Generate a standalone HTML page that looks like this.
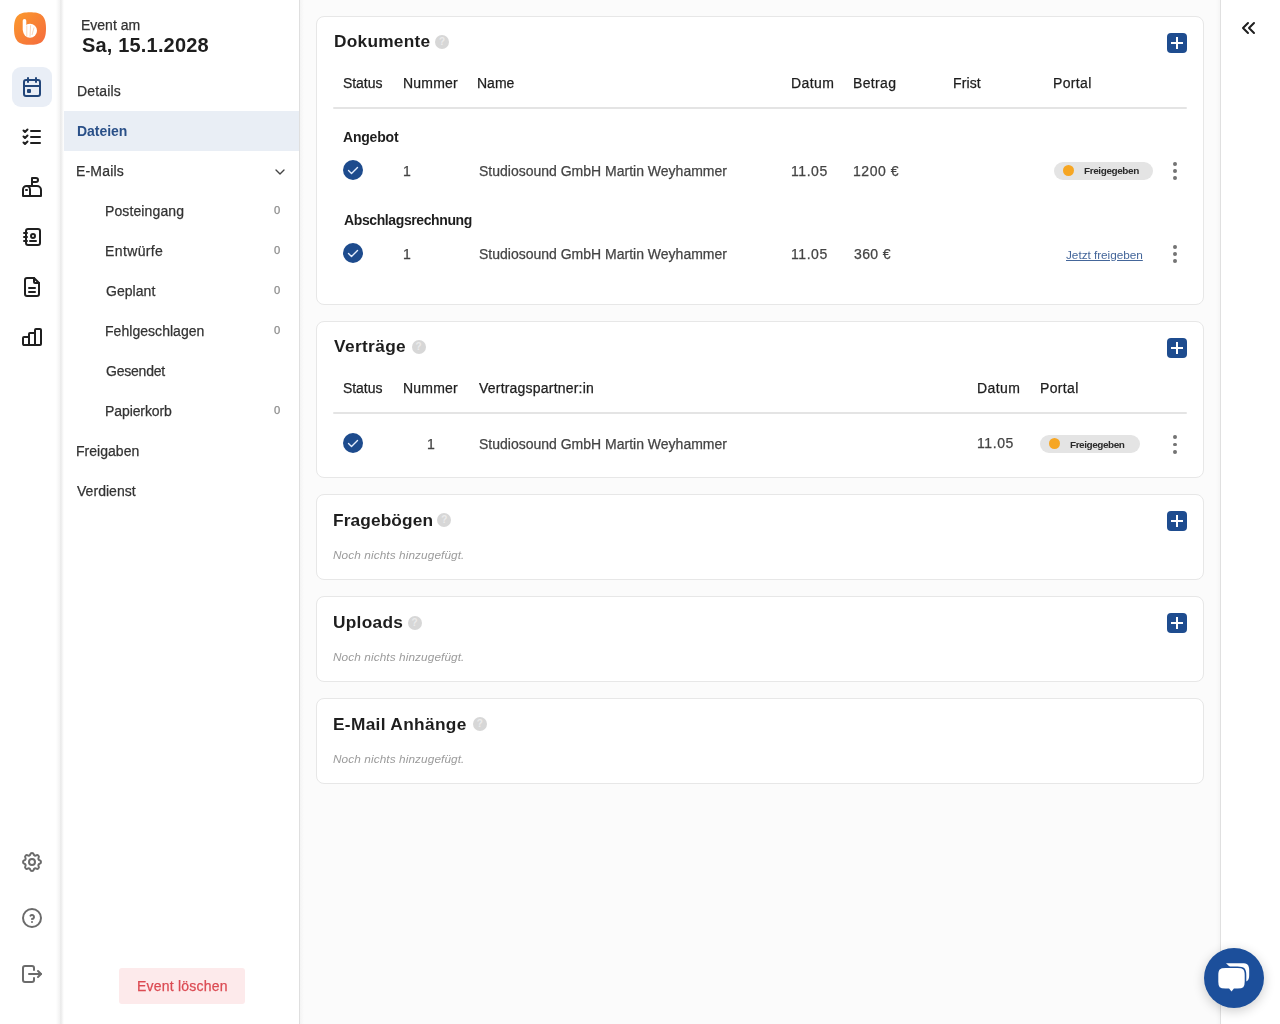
<!DOCTYPE html>
<html><head><meta charset="utf-8">
<style>
*{margin:0;padding:0;box-sizing:border-box}
html,body{width:1280px;height:1024px;overflow:hidden;background:#fbfbfb;font-family:"Liberation Sans",sans-serif;color:#222}
.a{position:absolute;white-space:nowrap;line-height:1;will-change:transform}
#iconbar{position:absolute;left:0;top:0;width:60px;height:1024px;background:#fff}
#shadow{position:absolute;left:56px;top:0;width:8px;height:1024px;background:linear-gradient(to right,#fff,#f3f3f3 45%,#e9e9e9 60%,#f5f5f5 80%,#fff)}
#nav{position:absolute;left:64px;top:0;width:235px;height:1024px;background:#fff}
#navborder{position:absolute;left:299px;top:0;width:1px;height:1024px;background:#dfdfdf}
#navshadow{position:absolute;left:300px;top:0;width:4px;height:1024px;background:linear-gradient(to right,#f4f4f4,#fbfbfb)}
#rpanel{position:absolute;left:1221px;top:0;width:59px;height:1024px;background:#fff}
#rborder{position:absolute;left:1220px;top:0;width:1px;height:1024px;background:#e0e0e0}
#rshadow{position:absolute;left:1216px;top:0;width:4px;height:1024px;background:linear-gradient(to right,#fbfbfb,#f5f5f5)}
.ic{position:absolute;width:24px;height:24px;fill:none;stroke:#1f1f1f;stroke-width:2;stroke-linecap:round;stroke-linejoin:round}
.ic.g{stroke:#6b6b6b}
.nav{font-size:14px;color:#333}
.cnt{font-size:11px;color:#9a9a9a}
.card{position:absolute;left:316px;width:888px;background:#fff;border:1px solid #e7e7e7;border-radius:8px}
.h{font-size:18px;font-weight:bold;color:#1e1e1e}
.th{font-size:14px;color:#1e1e1e}
.td{font-size:14px;color:#444}
.sub{font-size:14px;font-weight:bold;color:#1e1e1e}
.help{position:absolute;width:14px;height:14px;border-radius:50%;background:#d7d7d7}
.help:after{content:"?";position:absolute;left:0;top:0;width:14px;height:14px;text-align:center;font-size:10px;line-height:14px;font-weight:bold;color:#ebebeb}
.plus{position:absolute;left:1167px;width:20px;height:20px;border-radius:4px;background:#1e4c8f}
.plus:before{content:"";position:absolute;left:4px;top:9px;width:12px;height:2px;background:#fff}
.plus:after{content:"";position:absolute;left:9px;top:4px;width:2px;height:12px;background:#fff}
.div{position:absolute;left:332.5px;width:854.5px;height:2px;border-radius:1px;background:#e4e4e4}
.chk{position:absolute;width:20px;height:20px;border-radius:50%;background:#1d4b8d}
.chk svg{position:absolute;left:0;top:0}
.badge{position:absolute;height:18px;border-radius:9px;background:#e4e4e4}
.dot{position:absolute;width:11px;height:11px;border-radius:50%;background:#f6a623}
.bt{font-size:9.3px;font-weight:bold;color:#2a2a2a}
.keb{position:absolute;width:3.8px;height:3.8px;margin:0.1px;border-radius:50%;background:#747474}
.empty{font-size:11.9px;font-style:italic;color:#9b9b9b}
</style></head><body>
<div id="iconbar"></div>
<div id="shadow"></div>
<div id="nav"></div>
<div id="navborder"></div>
<div id="navshadow"></div>
<div id="rshadow"></div>
<div id="rborder"></div>
<div id="rpanel"></div>

<!-- logo -->
<svg style="position:absolute;left:13px;top:11px" width="34" height="35" viewBox="0 0 34 35">
<defs><linearGradient id="lg" x1="0" y1="0" x2="1" y2="1"><stop offset="0" stop-color="#fb9a2c"/><stop offset="1" stop-color="#f56a3e"/></linearGradient></defs>
<path d="M17 1.2 C27 1.2 33 3.5 33 17.5 C33 31.5 27 33.8 17 33.8 C7 33.8 1 31.5 1 17.5 C1 3.5 7 1.2 17 1.2z" fill="url(#lg)"/>
<rect x="9.7" y="7.9" width="3.6" height="13" rx="1.8" fill="#fff"/><circle cx="17" cy="19.8" r="7" fill="#fff"/>
<path d="M13.8 14.5 v11 M17.6 14.2 l-0.6 11.5 M21 16.5 l-2 7.5" stroke="#f9b98a" stroke-width="0.6" fill="none"/>
</svg>

<!-- active icon bg -->
<div style="position:absolute;left:12px;top:67px;width:40px;height:40px;border-radius:9px;background:#e9eef6"></div>
<svg class="ic" style="left:20px;top:75px;stroke:#22467a" viewBox="0 0 24 24"><path d="M4 7a2 2 0 0 1 2 -2h12a2 2 0 0 1 2 2v12a2 2 0 0 1 -2 2h-12a2 2 0 0 1 -2 -2z"/><path d="M16 3v4"/><path d="M8 3v4"/><path d="M4 11h16"/><path d="M8 15h2v2h-2z"/></svg>
<svg class="ic" style="left:20px;top:125px" viewBox="0 0 24 24"><path d="M3.5 5.5l1.5 1.5l2.5 -2.5"/><path d="M3.5 11.5l1.5 1.5l2.5 -2.5"/><path d="M3.5 17.5l1.5 1.5l2.5 -2.5"/><path d="M11 6h9"/><path d="M11 12h9"/><path d="M11 18h9"/></svg>
<svg class="ic" style="left:20px;top:175px" viewBox="0 0 24 24"><path d="M10 21v-6.5a3.5 3.5 0 0 0 -7 0v6.5h18v-6a4 4 0 0 0 -4 -4h-10.5"/><path d="M12 11v-8h4a2 2 0 0 1 0 4h-4"/><path d="M6 15h1"/></svg>
<svg class="ic" style="left:20px;top:225px" viewBox="0 0 24 24"><path d="M20 6v12a2 2 0 0 1 -2 2h-10a2 2 0 0 1 -2 -2v-12a2 2 0 0 1 2 -2h10a2 2 0 0 1 2 2z"/><path d="M10 16h6"/><path d="M11 11a2 2 0 1 0 4 0a2 2 0 1 0 -4 0"/><path d="M4 8h3"/><path d="M4 12h3"/><path d="M4 16h3"/></svg>
<svg class="ic" style="left:20px;top:275px" viewBox="0 0 24 24"><path d="M14 3v4a1 1 0 0 0 1 1h4"/><path d="M17 21h-10a2 2 0 0 1 -2 -2v-14a2 2 0 0 1 2 -2h7l5 5v11a2 2 0 0 1 -2 2z"/><path d="M9 17h6"/><path d="M9 13h6"/></svg>
<svg class="ic" style="left:20px;top:325px" viewBox="0 0 24 24"><path d="M3 13a1 1 0 0 1 1 -1h4a1 1 0 0 1 1 1v6a1 1 0 0 1 -1 1h-4a1 1 0 0 1 -1 -1z"/><path d="M9 9a1 1 0 0 1 1 -1h4a1 1 0 0 1 1 1v10a1 1 0 0 1 -1 1h-4a1 1 0 0 1 -1 -1z"/><path d="M15 5a1 1 0 0 1 1 -1h4a1 1 0 0 1 1 1v14a1 1 0 0 1 -1 1h-4a1 1 0 0 1 -1 -1z"/><path d="M4 20h14"/></svg>

<svg class="ic g" style="left:20px;top:850px" viewBox="0 0 24 24"><path d="M10.325 4.317c.426 -1.756 2.924 -1.756 3.35 0a1.724 1.724 0 0 0 2.573 1.066c1.543 -.94 3.31 .826 2.37 2.37a1.724 1.724 0 0 0 1.065 2.572c1.756 .426 1.756 2.924 0 3.35a1.724 1.724 0 0 0 -1.066 2.573c.94 1.543 -.826 3.31 -2.37 2.37a1.724 1.724 0 0 0 -2.572 1.065c-.426 1.756 -2.924 1.756 -3.35 0a1.724 1.724 0 0 0 -2.573 -1.066c-1.543 .94 -3.31 -.826 -2.37 -2.37a1.724 1.724 0 0 0 -1.065 -2.572c-1.756 -.426 -1.756 -2.924 0 -3.35a1.724 1.724 0 0 0 1.066 -2.573c-.94 -1.543 .826 -3.31 2.37 -2.37c1 .608 2.296 .07 2.572 -1.065z"/><path d="M9 12a3 3 0 1 0 6 0a3 3 0 0 0 -6 0"/></svg>
<svg class="ic g" style="left:20px;top:906px" viewBox="0 0 24 24"><path d="M3 12a9 9 0 1 0 18 0a9 9 0 1 0 -18 0"/><path d="M12 16v.01"/><path d="M12 13a2 2 0 0 0 .914 -3.782a1.98 1.98 0 0 0 -2.414 .483"/></svg>
<svg class="ic g" style="left:20px;top:962px" viewBox="0 0 24 24"><path d="M14 8v-2a2 2 0 0 0 -2 -2h-7a2 2 0 0 0 -2 2v12a2 2 0 0 0 2 2h7a2 2 0 0 0 2 -2v-2"/><path d="M9 12h12l-3 -3"/><path d="M18 15l3 -3"/></svg>

<!-- nav column -->

<div style="position:absolute;left:64px;top:111px;width:235px;height:40px;background:#e9eef5"></div>
<svg style="position:absolute;left:272px;top:163.7px;width:16px;height:16px" viewBox="0 0 24 24" fill="none" stroke="#444" stroke-width="2" stroke-linecap="round" stroke-linejoin="round"><path d="M6 9l6 6l6 -6"/></svg>

<div style="position:absolute;left:119px;top:968px;width:126px;height:36px;border-radius:3px;background:#fdeaeb"></div>

<!-- main -->
<div class="card" style="top:16px;height:289px"></div>
<div class="card" style="top:321px;height:157px"></div>
<div class="card" style="top:494px;height:86px"></div>
<div class="card" style="top:596px;height:86px"></div>
<div class="card" style="top:698px;height:86px"></div>
<div class="help" style="left:435.0px;top:34.8px"></div>
<div class="help" style="left:411.6px;top:340.0px"></div>
<div class="help" style="left:437.2px;top:513.4px"></div>
<div class="help" style="left:407.6px;top:615.5px"></div>
<div class="help" style="left:472.9px;top:717.0px"></div>
<div class="plus" style="top:33px"></div>
<div class="plus" style="top:338px"></div>
<div class="plus" style="top:511px"></div>
<div class="plus" style="top:613px"></div>
<div class="div" style="top:107px"></div>
<div class="chk" style="left:343px;top:160px"><svg width="20" height="20" viewBox="0 0 20 20"><path d="M5.5 10.5l3 3l6 -6" fill="none" stroke="#e4eeff" stroke-width="1.4" stroke-linecap="round" stroke-linejoin="round"/></svg></div>
<div class="badge" style="left:1054px;top:162px;width:99px"></div>
<div class="dot" style="left:1062.8px;top:165px"></div>
<div class="keb" style="left:1173.2px;top:161.9px"></div>
<div class="keb" style="left:1173.2px;top:168.9px"></div>
<div class="keb" style="left:1173.2px;top:175.9px"></div>
<div class="chk" style="left:343px;top:243px"><svg width="20" height="20" viewBox="0 0 20 20"><path d="M5.5 10.5l3 3l6 -6" fill="none" stroke="#e4eeff" stroke-width="1.4" stroke-linecap="round" stroke-linejoin="round"/></svg></div>
<div class="keb" style="left:1173.2px;top:245.4px"></div>
<div class="keb" style="left:1173.2px;top:252.4px"></div>
<div class="keb" style="left:1173.2px;top:259.4px"></div>
<div class="div" style="top:412px"></div>
<div class="chk" style="left:343px;top:433px"><svg width="20" height="20" viewBox="0 0 20 20"><path d="M5.5 10.5l3 3l6 -6" fill="none" stroke="#e4eeff" stroke-width="1.4" stroke-linecap="round" stroke-linejoin="round"/></svg></div>
<div class="badge" style="left:1040px;top:435px;width:100px"></div>
<div class="dot" style="left:1049.2px;top:438.2px"></div>
<div class="keb" style="left:1173.2px;top:435.0px"></div>
<div class="keb" style="left:1173.2px;top:442.5px"></div>
<div class="keb" style="left:1173.2px;top:450.0px"></div>

<div class="a" style="left:80.50px;top:17.75px;font-size:14px;color:#333;-webkit-text-stroke:0.25px #333">Event am</div>
<div class="a" style="left:81.50px;top:35.30px;font-size:20px;color:#1e1e1e;font-weight:bold;letter-spacing:0.173px">Sa, 15.1.2028</div>
<div class="a" style="left:76.75px;top:83.60px;font-size:14px;color:#333;-webkit-text-stroke:0.25px #333;letter-spacing:0.176px">Details</div>
<div class="a" style="left:77.25px;top:124.20px;font-size:14px;color:#2a5088;font-weight:bold;letter-spacing:-0.045px">Dateien</div>
<div class="a" style="left:76.25px;top:164.00px;font-size:14px;color:#333;-webkit-text-stroke:0.25px #333;letter-spacing:0.180px">E-Mails</div>
<div class="a" style="left:104.60px;top:204.30px;font-size:14px;color:#333;-webkit-text-stroke:0.25px #333;letter-spacing:0.115px">Posteingang</div>
<div class="a" style="left:104.60px;top:244.30px;font-size:14px;color:#333;-webkit-text-stroke:0.25px #333;letter-spacing:0.377px">Entwürfe</div>
<div class="a" style="left:105.60px;top:284.30px;font-size:14px;color:#333;-webkit-text-stroke:0.25px #333;letter-spacing:0.043px">Geplant</div>
<div class="a" style="left:104.60px;top:324.30px;font-size:14px;color:#333;-webkit-text-stroke:0.25px #333;letter-spacing:0.041px">Fehlgeschlagen</div>
<div class="a" style="left:105.60px;top:364.30px;font-size:14px;color:#333;-webkit-text-stroke:0.25px #333;letter-spacing:-0.217px">Gesendet</div>
<div class="a" style="left:104.60px;top:404.30px;font-size:14px;color:#333;-webkit-text-stroke:0.25px #333;letter-spacing:-0.091px">Papierkorb</div>
<div class="a" style="left:76.40px;top:444.00px;font-size:14px;color:#333;-webkit-text-stroke:0.25px #333;letter-spacing:0.031px">Freigaben</div>
<div class="a" style="left:77.40px;top:483.70px;font-size:14px;color:#333;-webkit-text-stroke:0.25px #333;letter-spacing:0.040px">Verdienst</div>
<div class="a" style="left:273.80px;top:204.90px;font-size:11.2px;color:#8c8c8c;-webkit-text-stroke:0.25px #8c8c8c">0</div>
<div class="a" style="left:273.80px;top:244.90px;font-size:11.2px;color:#8c8c8c;-webkit-text-stroke:0.25px #8c8c8c">0</div>
<div class="a" style="left:273.80px;top:284.90px;font-size:11.2px;color:#8c8c8c;-webkit-text-stroke:0.25px #8c8c8c">0</div>
<div class="a" style="left:273.80px;top:324.90px;font-size:11.2px;color:#8c8c8c;-webkit-text-stroke:0.25px #8c8c8c">0</div>
<div class="a" style="left:273.80px;top:404.90px;font-size:11.2px;color:#8c8c8c;-webkit-text-stroke:0.25px #8c8c8c">0</div>
<div class="a" style="left:136.50px;top:978.80px;font-size:14px;color:#db4b53;-webkit-text-stroke:0.25px #db4b53;letter-spacing:0.216px">Event löschen</div>
<div class="a" style="left:333.50px;top:32.90px;font-size:17.3px;color:#1e1e1e;font-weight:bold;letter-spacing:0.251px">Dokumente</div>
<div class="a" style="left:333.70px;top:338.40px;font-size:17.3px;color:#1e1e1e;font-weight:bold;letter-spacing:0.363px">Verträge</div>
<div class="a" style="left:332.60px;top:511.80px;font-size:17.3px;color:#1e1e1e;font-weight:bold;letter-spacing:0.118px">Fragebögen</div>
<div class="a" style="left:332.60px;top:614.00px;font-size:17.3px;color:#1e1e1e;font-weight:bold;letter-spacing:0.290px">Uploads</div>
<div class="a" style="left:332.60px;top:716.00px;font-size:17.3px;color:#1e1e1e;font-weight:bold;letter-spacing:0.330px">E-Mail Anhänge</div>
<div class="a" style="left:343.40px;top:75.60px;font-size:14px;color:#1e1e1e;-webkit-text-stroke:0.25px #1e1e1e;letter-spacing:-0.058px">Status</div>
<div class="a" style="left:402.80px;top:75.60px;font-size:14px;color:#1e1e1e;-webkit-text-stroke:0.25px #1e1e1e;letter-spacing:0.199px">Nummer</div>
<div class="a" style="left:477.40px;top:75.60px;font-size:14px;color:#1e1e1e;-webkit-text-stroke:0.25px #1e1e1e;letter-spacing:0.014px">Name</div>
<div class="a" style="left:790.70px;top:75.60px;font-size:14px;color:#1e1e1e;-webkit-text-stroke:0.25px #1e1e1e;letter-spacing:0.407px">Datum</div>
<div class="a" style="left:853.30px;top:75.60px;font-size:14px;color:#1e1e1e;-webkit-text-stroke:0.25px #1e1e1e;letter-spacing:0.348px">Betrag</div>
<div class="a" style="left:953.00px;top:75.60px;font-size:14px;color:#1e1e1e;-webkit-text-stroke:0.25px #1e1e1e;letter-spacing:0.119px">Frist</div>
<div class="a" style="left:1053.20px;top:75.60px;font-size:14px;color:#1e1e1e;-webkit-text-stroke:0.25px #1e1e1e;letter-spacing:0.348px">Portal</div>
<div class="a" style="left:343.40px;top:129.60px;font-size:14px;color:#1e1e1e;font-weight:bold;letter-spacing:-0.201px">Angebot</div>
<div class="a" style="left:343.50px;top:213.00px;font-size:14px;color:#1e1e1e;font-weight:bold;letter-spacing:-0.392px">Abschlagsrechnung</div>
<div class="a" style="left:403.40px;top:163.50px;font-size:14px;color:#444;-webkit-text-stroke:0.25px #444">1</div>
<div class="a" style="left:478.50px;top:163.50px;font-size:14px;color:#444;-webkit-text-stroke:0.25px #444">Studiosound GmbH Martin Weyhammer</div>
<div class="a" style="left:790.90px;top:163.50px;font-size:14px;color:#444;-webkit-text-stroke:0.25px #444;letter-spacing:0.548px">11.05</div>
<div class="a" style="left:853.30px;top:163.50px;font-size:14px;color:#444;-webkit-text-stroke:0.25px #444;letter-spacing:0.533px">1200 €</div>
<div class="a" style="left:403.40px;top:246.90px;font-size:14px;color:#444;-webkit-text-stroke:0.25px #444">1</div>
<div class="a" style="left:478.50px;top:246.90px;font-size:14px;color:#444;-webkit-text-stroke:0.25px #444">Studiosound GmbH Martin Weyhammer</div>
<div class="a" style="left:790.90px;top:246.90px;font-size:14px;color:#444;-webkit-text-stroke:0.25px #444;letter-spacing:0.548px">11.05</div>
<div class="a" style="left:854.30px;top:246.90px;font-size:14px;color:#444;-webkit-text-stroke:0.25px #444;letter-spacing:0.363px">360 €</div>
<div class="a" style="left:1083.80px;top:166.30px;font-size:9.96px;color:#2a2a2a;font-weight:bold;letter-spacing:-0.390px">Freigegeben</div>
<div class="a" style="left:1065.60px;top:249.50px;font-size:11.8px;color:#44669a;-webkit-text-stroke:0.25px #44669a;letter-spacing:-0.037px;-webkit-text-stroke:0;text-decoration:underline;text-underline-offset:1px">Jetzt freigeben</div>
<div class="a" style="left:343.40px;top:380.60px;font-size:14px;color:#1e1e1e;-webkit-text-stroke:0.25px #1e1e1e;letter-spacing:-0.058px">Status</div>
<div class="a" style="left:402.80px;top:380.60px;font-size:14px;color:#1e1e1e;-webkit-text-stroke:0.25px #1e1e1e;letter-spacing:0.199px">Nummer</div>
<div class="a" style="left:478.50px;top:380.60px;font-size:14px;color:#1e1e1e;-webkit-text-stroke:0.25px #1e1e1e;letter-spacing:0.206px">Vertragspartner:in</div>
<div class="a" style="left:976.80px;top:380.60px;font-size:14px;color:#1e1e1e;-webkit-text-stroke:0.25px #1e1e1e;letter-spacing:0.407px">Datum</div>
<div class="a" style="left:1039.60px;top:380.60px;font-size:14px;color:#1e1e1e;-webkit-text-stroke:0.25px #1e1e1e;letter-spacing:0.338px">Portal</div>
<div class="a" style="left:426.70px;top:436.50px;font-size:14px;color:#444;-webkit-text-stroke:0.25px #444">1</div>
<div class="a" style="left:478.50px;top:436.50px;font-size:14px;color:#444;-webkit-text-stroke:0.25px #444">Studiosound GmbH Martin Weyhammer</div>
<div class="a" style="left:976.80px;top:435.80px;font-size:14px;color:#444;-webkit-text-stroke:0.25px #444;letter-spacing:0.598px">11.05</div>
<div class="a" style="left:1070.25px;top:439.50px;font-size:9.96px;color:#2a2a2a;font-weight:bold;letter-spacing:-0.435px">Freigegeben</div>
<div class="a" style="left:333.20px;top:549.60px;font-size:11.8px;color:#9b9b9b;font-style:italic;letter-spacing:0.095px">Noch nichts hinzugefügt.</div>
<div class="a" style="left:333.20px;top:651.80px;font-size:11.8px;color:#9b9b9b;font-style:italic;letter-spacing:0.095px">Noch nichts hinzugefügt.</div>
<div class="a" style="left:333.20px;top:753.90px;font-size:11.8px;color:#9b9b9b;font-style:italic;letter-spacing:0.095px">Noch nichts hinzugefügt.</div>
<!-- right panel -->
<svg class="ic" style="left:1237px;top:16px" viewBox="0 0 24 24"><path d="M11 7l-5 5l5 5"/><path d="M17 7l-5 5l5 5"/></svg>

<!-- chat -->
<div style="position:absolute;left:1204px;top:948px;width:60px;height:60px;border-radius:50%;background:#1c4f9b;box-shadow:0 3px 12px rgba(0,0,0,.2)"></div>
<svg style="position:absolute;left:1204px;top:948px" width="60" height="60" viewBox="0 0 60 60">
<path d="M22 15.2 h16 c5.5 0 7.2 1.8 7.2 7.5 v3.5 c0 5 -1 6.5 -3.5 7.2 z" fill="#fff"/>
<path d="M21.5 19.3 h12 c6.3 0 8 1.6 8 8 v6.5 c0 6 -1.7 7.6 -8 7.6 h-3.2 l-2.8 3.4 l-2.8 -3.4 h-3.2 c-6.3 0 -8 -1.6 -8 -7.6 v-6.5 c0 -6.4 1.7 -8 8 -8z" fill="#fff" stroke="#1c4f9b" stroke-width="1.6"/>
</svg>
</body></html>
